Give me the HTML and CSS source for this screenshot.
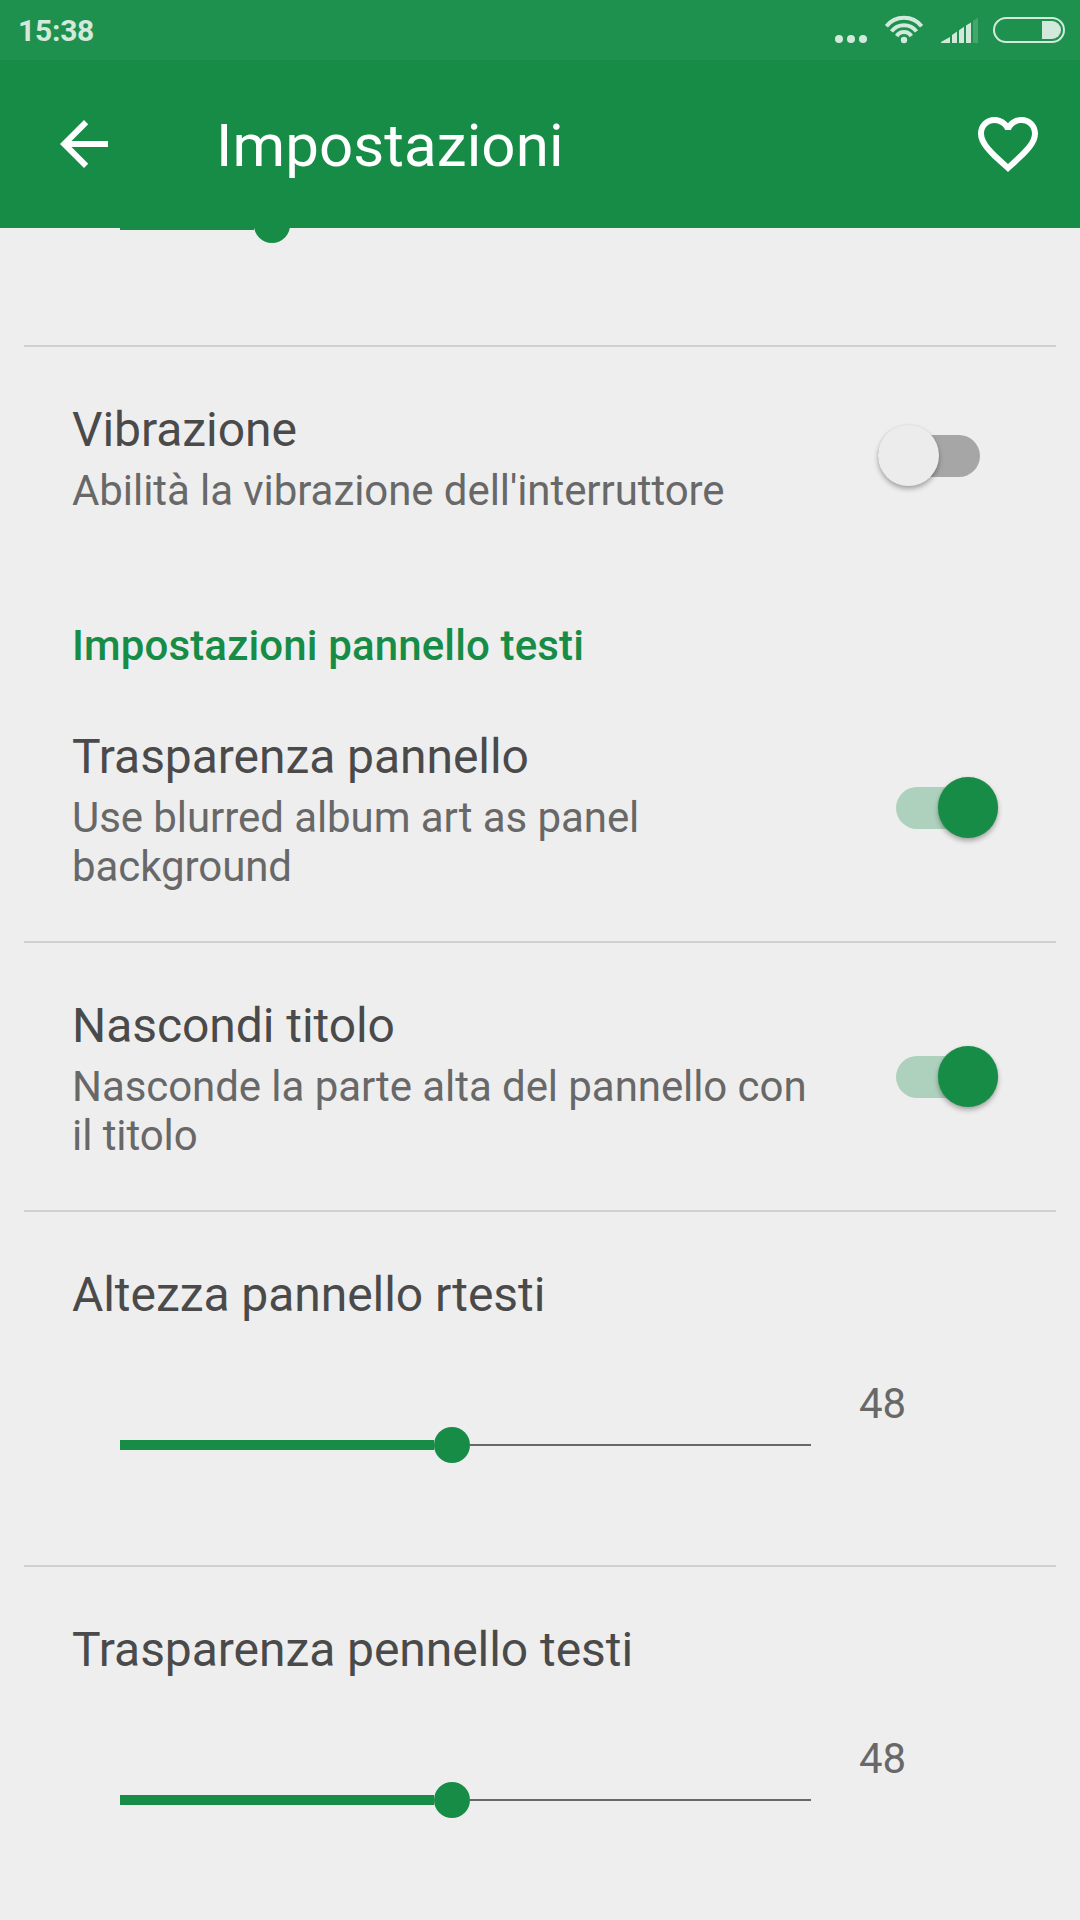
FILE: index.html
```html
<!DOCTYPE html>
<html lang="it">
<head>
<meta charset="utf-8">
<title>Impostazioni</title>
<link rel="stylesheet" href="styles.css">
</head>
<body>
<div class="status-bar">
  <span class="clock">15:38</span>
  <svg class="status-icons" width="280" height="60" viewBox="800 0 280 60" aria-hidden="true">
    <g fill="#d2e9dc">
      <circle cx="839" cy="39" r="4"/><circle cx="851" cy="39" r="4"/><circle cx="863" cy="39" r="4"/>
      <circle cx="904" cy="40" r="3.2"/>
      <path d="M941 42L950 37V43H941ZM952 35L957 31.6V43H952ZM959 30.2L964 26.8V43H959ZM966 25.6L971 22.4V43H966Z"/>
      <path d="M973 20.8L978 17.8V43H973Z" opacity=".22"/>
      <path d="M1042 21H1052A9 9 0 0 1 1052 39H1042Z"/>
    </g>
    <g fill="none" stroke="#d2e9dc">
      <path stroke-width="4" d="M886.4 26.2A22.6 22.6 0 0 1 921.6 26.2M891.5 31.4A15.6 15.6 0 0 1 916.5 31.4M896.7 36.1A8.6 8.6 0 0 1 911.3 36.1"/>
      <rect x="994" y="18" width="70" height="24" rx="12" stroke-width="2"/>
    </g>
  </svg>
</div>
<header class="toolbar">
  <svg class="icon" viewBox="0 0 24 24" role="img" aria-label="Indietro"><path d="M20 11H7.83l5.59-5.59L12 4l-8 8 8 8 1.41-1.41L7.83 13H20v-2z"/></svg>
  <h1 class="toolbar-title">Impostazioni</h1>
  <svg class="icon" viewBox="0 0 24 24" role="img" aria-label="Preferiti"><path d="M16.5 3c-1.74 0-3.41.81-4.5 2.09C10.91 3.81 9.24 3 7.5 3 4.42 3 2 5.42 2 8.5c0 3.78 3.4 6.86 8.55 11.54L12 21.35l1.45-1.32C18.6 15.36 22 12.28 22 8.5 22 5.42 19.58 3 16.5 3zm-4.4 15.55l-.1.1-.1-.1C7.14 14.24 4 11.39 4 8.5 4 6.5 5.5 5 7.5 5c1.54 0 3.04.99 3.57 2.36h1.87C13.46 5.99 14.96 5 16.5 5c2 0 3.5 1.5 3.5 3.5 0 2.89-3.14 5.74-7.9 10.05z"/></svg>
</header>
<main class="settings">
  <section class="scrolled-row">
    <div class="slider"><div class="slider-fill" style="width:134px"></div><div class="slider-thumb"></div><div class="slider-rest"></div></div>
  </section>
  <section class="row">
    <div class="row-text">
      <h2 class="title">Vibrazione</h2>
      <p class="summary">Abilità la vibrazione dell'interruttore</p>
    </div>
    <div class="switch"><div class="knob"></div></div>
  </section>
  <h3 class="category">Impostazioni pannello testi</h3>
  <section class="row">
    <div class="row-text">
      <h2 class="title">Trasparenza pannello</h2>
      <p class="summary">Use blurred album art as panel<br>background</p>
    </div>
    <div class="switch on"><div class="knob"></div></div>
  </section>
  <section class="row divided">
    <div class="row-text">
      <h2 class="title">Nascondi titolo</h2>
      <p class="summary">Nasconde la parte alta del pannello con<br>il titolo</p>
    </div>
    <div class="switch on"><div class="knob"></div></div>
  </section>
  <section class="row slider-row divided">
    <h2 class="title">Altezza pannello rtesti</h2>
    <div class="slider-line">
      <div class="slider"><div class="slider-fill" style="width:314px"></div><div class="slider-thumb"></div><div class="slider-rest"></div></div>
      <span class="value">48</span>
    </div>
  </section>
  <section class="row slider-row divided">
    <h2 class="title">Trasparenza pennello testi</h2>
    <div class="slider-line">
      <div class="slider"><div class="slider-fill" style="width:314px"></div><div class="slider-thumb"></div><div class="slider-rest"></div></div>
      <span class="value">48</span>
    </div>
  </section>
</main>
</body>
</html>
```
FILE: styles.css
```css
* { box-sizing: border-box; margin: 0; padding: 0; }

body {
  width: 1080px;
  height: 1920px;
  display: flex;
  flex-direction: column;
  overflow: hidden;
  background: #eee;
  color: #4a4a4a;
  font-family: Roboto, sans-serif;
}

.status-bar {
  flex: none;
  height: 60px;
  padding-left: 18px;
  display: flex;
  justify-content: space-between;
  background: #1f914f;
}
.clock {
  color: #d2e9dc;
  font-size: 30px;
  font-weight: 700;
  line-height: 62px;
  letter-spacing: -.25px;
}
.status-icons { display: block; }

.toolbar {
  flex: none;
  height: 168px;
  padding: 0 36px 0 48px;
  display: flex;
  align-items: center;
  background: #168c46;
  color: #fff;
}
.icon { flex: none; width: 72px; height: 72px; fill: #fff; }
.toolbar-title {
  flex: 1;
  padding-left: 96px;
  font-size: 60px;
  font-weight: 400;
  line-height: 72px;
  letter-spacing: .1px;
  padding-top: 3px;
}

.settings { flex: 1; overflow: hidden; }

.scrolled-row {
  height: 119px;
  margin: 0 24px;
  padding-left: 96px;
  overflow: hidden;
  border-bottom: 2px solid #d0d0d0;
}
.scrolled-row .slider { margin-top: -21px; }

.row {
  margin: 0 24px;
  padding: 54px 58px 50px 48px;
  display: flex;
  justify-content: space-between;
}
.divided { border-top: 2px solid #d0d0d0; }
.title {
  font-size: 48px;
  font-weight: 400;
  line-height: 57px;
  letter-spacing: -.06px;
  white-space: nowrap;
}
.summary {
  margin-top: 8px;
  color: #686868;
  font-size: 42px;
  line-height: 49px;
  letter-spacing: -.07px;
  white-space: nowrap;
}
.category {
  height: 109px;
  padding: 56px 72px 0;
  color: #168c46;
  font-size: 42px;
  font-weight: 500;
  line-height: 49px;
  letter-spacing: .14px;
}

/* Switch: a 102px track with a round knob that overhangs it on both axes. */
.switch {
  flex: none;
  align-self: center;
  width: 120px;
  height: 60px;
  padding-right: 18px;
  margin-top: -4px;
  display: flex;
  align-items: center;
}
.switch::before {
  content: "";
  flex: none;
  width: 102px;
  height: 42px;
  border-radius: 21px;
  background: #a6a6a6;
}
.knob {
  flex: none;
  width: 60.5px;
  height: 60.5px;
  margin-left: -101.7px;
  margin-top: -1px;
  border-radius: 50%;
  background: #ececec;
  box-shadow: 0 3px 5px rgba(0, 0, 0, .3), 0 0 2px rgba(0, 0, 0, .08);
}
.switch.on { padding-right: 0; width: 102px; margin-top: -3px; }
.switch.on::before { background: #add1bd; }
.switch.on .knob { margin-left: -60.5px; background: #168c46; }

.slider-row { height: 355px; flex-direction: column; justify-content: flex-start; }
.slider-line {
  margin-top: 56px;
  padding-left: 48px;
  display: flex;
  align-items: flex-start;
}
.slider-line .slider { margin-top: 48px; }
.slider {
  width: 691px;
  height: 36px;
  display: flex;
  align-items: center;
}
.slider-fill { flex: none; height: 10px; background: #168c46; }
.slider-thumb { flex: none; width: 36px; height: 36px; border-radius: 50%; background: #168c46; }
.slider-rest { flex: 1; height: 2px; background: #686868; }
.value {
  margin-left: 48px;
  color: #686868;
  font-size: 42px;
  line-height: 49px;
}
```
